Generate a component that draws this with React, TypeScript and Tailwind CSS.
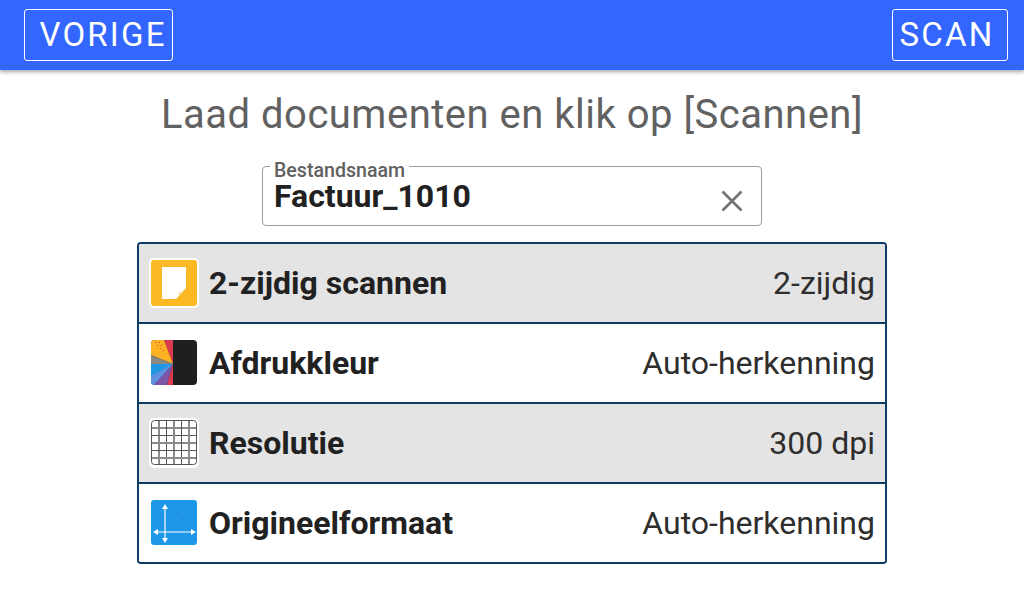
import React from 'react';

// Small square setting icons, drawn at 50x50 with a white rim
function DuplexIcon() {
  return (
    <svg width="50" height="50" viewBox="0 0 50 50">
      <rect x="1" y="1" width="48" height="48" rx="4" fill="#fdb924" stroke="#fff" strokeWidth="2" />
      <path d="M13 9 H37 V30 L27 41 H13 Z" fill="#fff" />
      <path d="M29.500 34 H34 L29.500 38.500 Z" fill="#fee3a6" />
    </svg>
  );
}

function ColorIcon() {
  return (
    <svg width="50" height="50" viewBox="0 0 50 50">
      <defs>
        <clipPath id="colorClip">
          <rect x="2" y="2" width="46" height="45" rx="4" />
        </clipPath>
      </defs>
      <g clipPath="url(#colorClip)">
        <rect x="2" y="2" width="46" height="45" fill="#1f1f1f" />
        <path d="M24 26 L15 2 H24 Z" fill="#dc3a4f" />
        <path d="M24 26 L2 17 V2 H15 Z" fill="#fdb124" />
        <path d="M24 26 L2 17 V26 Z" fill="#8a8a80" />
        <path d="M24 26 H2 V47 H5 Z" fill="#2196e3" />
        <path d="M24 26 L2 38 V47 H5 Z" fill="#5f8fe0" />
        <path d="M24 26 L5 47 H18 Z" fill="#7a55a8" />
        <path d="M24 26 L18 47 H24 Z" fill="#dc3a4f" />
        <g fill="#dc3a4f">
          <rect x="6" y="4" width="1" height="1" />
          <rect x="10" y="4" width="1" height="1" />
          <rect x="8" y="7" width="1" height="1" />
          <rect x="12" y="7" width="1" height="1" />
          <rect x="11" y="10" width="1" height="1" />
          <rect x="14" y="12" width="1" height="1" />
        </g>
      </g>
    </svg>
  );
}

function GridIcon() {
  const lines = [10, 17.5, 25, 32.5, 40];
  return (
    <svg width="50" height="50" viewBox="0 0 50 50">
      <rect x="1" y="1" width="48" height="48" rx="4" fill="#fff" stroke="#fff" strokeWidth="2" />
      <rect x="2.500" y="2.500" width="45" height="44" rx="3" fill="none" stroke="#555" strokeWidth="1" />
      {lines.map((p, i) => (
        <g key={p} stroke={i % 2 === 0 ? '#8a8a8a' : '#555'} strokeWidth={i % 2 === 0 ? 2 : 1}>
          <line x1={p} y1="3" x2={p} y2="46" />
          <line x1="3" y1={p} x2="47" y2={p} />
        </g>
      ))}
    </svg>
  );
}

function SizeIcon() {
  return (
    <svg width="50" height="50" viewBox="0 0 50 50">
      <rect x="2" y="2" width="46" height="45" rx="3" fill="#1e97e8" />
      <g stroke="#fff" strokeWidth="1.200" fill="#fff">
        <line x1="16" y1="9" x2="16" y2="42" />
        <line x1="6" y1="34" x2="44" y2="34" />
      </g>
      <g fill="#fff">
        <path d="M16 6 L19 11 H13 Z" />
        <path d="M16 45 L19 40 H13 Z" />
        <path d="M4 34 L9 31 V37 Z" />
        <path d="M47 34 L42 31 V37 Z" />
      </g>
      <g fill="#2f6bf0">
        <rect x="29" y="14" width="1" height="1" />
        <rect x="39" y="15" width="1" height="1" />
        <rect x="25" y="20" width="1" height="1" />
        <rect x="34" y="20" width="1" height="1" />
        <rect x="42" y="25" width="1" height="1" />
        <rect x="29" y="28" width="1" height="1" />
      </g>
    </svg>
  );
}

const rows = [
  { label: '2-zijdig scannen', value: '2-zijdig', icon: <DuplexIcon />, shaded: true },
  { label: 'Afdrukkleur', value: 'Auto-herkenning', icon: <ColorIcon />, shaded: false },
  { label: 'Resolutie', value: '300 dpi', icon: <GridIcon />, shaded: true },
  { label: 'Origineelformaat', value: 'Auto-herkenning', icon: <SizeIcon />, shaded: false },
];

export default function App() {
  return (
    <div className="w-[1024px] h-[600px] overflow-hidden bg-white font-['Roboto',sans-serif] text-[#212121]">
      {/* Top bar */}
      <div className="h-[70px] bg-[#3366ff] flex items-center justify-between pl-6 pr-4 shadow-[0_2px_4px_rgba(0,0,0,0.35)]">
        <div className="w-[149px] h-[52px] border border-white rounded-[3px] text-white text-[33px] tracking-[2.2px] flex items-center justify-center pl-[9px] mt-[-1px]">
          VORIGE
        </div>
        <div className="w-[116px] h-[52px] border border-white rounded-[3px] text-white text-[33px] tracking-[2.2px] flex items-center justify-center pr-[6px] mt-[-1px]">
          SCAN
        </div>
      </div>

      <h1 className="mt-[20px] h-[50px] text-center text-[40px] tracking-[0.5px] leading-[50px] text-[#616161] font-normal">
        Laad documenten en klik op [Scannen]
      </h1>

      {/* File name field */}
      <div className="relative mx-auto mt-[26px] w-[500px] h-[60px] border border-[#9e9e9e] rounded-[4px] flex items-center justify-between pl-[11px] pr-[16px]">
        <span className="absolute left-[7px] top-[-5px] bg-white px-[4px] text-[19.6px] leading-[18px] font-medium text-[#616161]">
          Bestandsnaam
        </span>
        <span className="text-[32px] leading-[32px] font-bold">Factuur_1010</span>
        <svg width="26" height="26" viewBox="0 0 26 26" className="mt-[10px]">
          <path d="M3.500 3.500 L22.500 22.500 M22.500 3.500 L3.500 22.500" stroke="#757575" strokeWidth="2.800" fill="none" />
        </svg>
      </div>

      {/* Settings list */}
      <div className="mx-auto mt-4 w-[750px] h-[322px] border-2 border-[#0d3b66] rounded-[4px] overflow-hidden flex flex-col">
        {rows.map((row, i) => (
          <div
            key={row.label}
            className={`flex-1 flex items-center justify-between pl-[10px] pr-[10px] ${row.shaded ? 'bg-[#e4e4e4]' : 'bg-white'} ${i > 0 ? 'border-t-2 border-[#0d3b66]' : ''}`}
          >
            <div className="flex items-center gap-[10px]">
              {row.icon}
              <span className="text-[32px] font-bold leading-[36px]">{row.label}</span>
            </div>
            <span className="text-[32px] text-[#2e2e2e] leading-[36px]">{row.value}</span>
          </div>
        ))}
      </div>
    </div>
  );
}
